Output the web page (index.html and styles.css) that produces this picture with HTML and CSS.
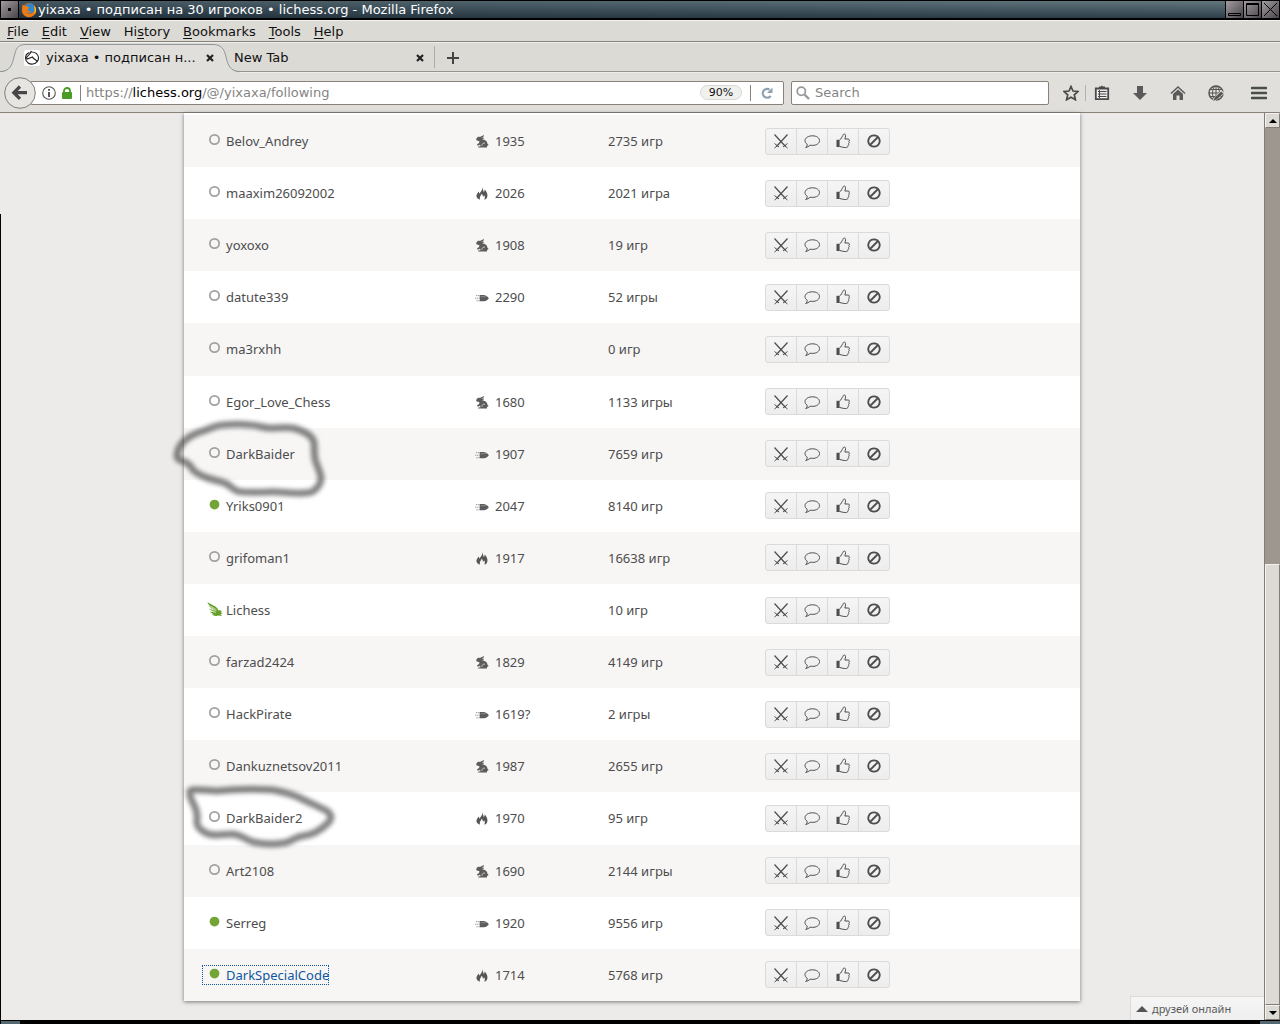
FILE: index.html
```html
<!DOCTYPE html>
<html lang="ru">
<head>
<meta charset="utf-8">
<title>yixaxa • подписан на 30 игроков • lichess.org</title>
<link rel="stylesheet" href="styles.css">
</head>
<body>
<svg class="sprite" aria-hidden="true">
  <symbol id="off" viewBox="0 0 12 12"><circle cx="6" cy="6" r="4.300" fill="none" stroke="#a0a0a0" stroke-width="1.600"/></symbol>
  <symbol id="on" viewBox="0 0 12 12"><circle cx="6" cy="6" r="4.500" fill="#72a536"/></symbol>
  <symbol id="wing" viewBox="0 0 16 16"><path fill="#639f26" d="M.5 1C5 4.500 9.500 4.500 11.500 9.500 13 9 14 9.500 15 10.500L13.500 11 15.500 12.500 13.500 13 15 15 11.500 14.500C8.500 15.500 6 14.500 5 13.200L10 13.300C7 13.300 4 12.500 3 10.500L9.500 11.800C5.500 10.800 3 9.500 2 7.500L9.500 10.500C5 8 2.500 6.500 1.600 4.500L10.500 9.200C6 5.500 1 5 .5 1z"/><path d="M2.500 5.500L9.500 9.800M3 9L9 11.500" stroke="#fff" stroke-width=".6"/></symbol>
  <symbol id="rabbit" viewBox="0 0 13 13"><path fill="#5c5c5c" d="M1 3.500C1.500 2 3 1.600 4.300 1.900L8.500 0 8.200 1.500 6 2.800 8.500 2.600 8 3.700 6 4.300C9.500 4.300 12 6.500 12 9L13 9.500 12.500 10.800 11.500 10.700V12.500H2.500L3 11.500 5 11.200 4.500 9.400 3.500 10.500 1.500 10.300 1.700 9.300 3.500 8 4 6.200 1.500 5.600C.6 5.200.6 4.300 1 3.500z"/><path d="M6.500 10.800C6.300 8.800 7.700 7.700 9.500 8.200" fill="none" stroke="#ddd" stroke-width=".8"/></symbol>
  <symbol id="fire" viewBox="0 0 13 14"><path fill="#555" d="M7 0C7.500 3 8 3.500 8.300 5.300 9.300 4.500 9.600 3.500 9.300 2.300 11.500 5 13 7.500 12.200 10.500 11.800 12.300 10.800 13.200 9 13.700 9.800 12 9.800 10.500 8.800 9 8.500 10 8 10.300 7.500 10.600 7.400 9 7 8 6 7.300 5.700 9.300 3.300 10.500 4.500 13.800 2 13 .4 11.500.5 9.500.7 7.500 2.200 6.500 2.700 4.800 3.400 5.500 3.500 6.300 3.400 7.200 5.500 5 7.300 3 7 0z"/></symbol>
  <symbol id="bullet" viewBox="0 -1 15 9"><path fill="#5c5c5c" d="M5 .8H9.500C12 1.300 14 3 14.800 4.200 14 5.600 12 7.200 9.500 7.600H5z"/><path d="M1 1.500H5M0 4.300H5M1.500 7H5" fill="none" stroke="#888" stroke-width=".9" stroke-dasharray="1.500 .7"/><path d="M6 2.600H12" stroke="#aaa" stroke-width=".6"/></symbol>
  <symbol id="swords" viewBox="0 0 16 16"><g fill="none" stroke="currentColor"><path d="M1.500 1.500L12.500 13.500M14.500 1.500L3.500 13.500" stroke-width="1.200"/><path d="M1.500 10.500L6 14M14.500 10.500L10 14M1.500 15L4.500 12.500M14.500 15L11.500 12.500" stroke-width="1"/></g></symbol>
  <symbol id="chat" viewBox="0 0 16 16"><path fill="none" stroke="currentColor" stroke-width="1" d="M8.500 2.800C12.500 2.800 15.500 4.800 15.500 7.600S12.500 12.400 8.500 12.400C7.800 12.400 7 12.300 6.300 12.200 4.800 13.300 3.500 14.200 1.700 14.500 2.800 13.300 3.200 12.500 3.200 11.200 1.800 10.300 1 9 1 7.600 1 4.800 4.500 2.800 8.500 2.800z"/></symbol>
  <symbol id="thumb" viewBox="0 0 16 16"><path fill="none" stroke="currentColor" stroke-width="1" d="M4.500 7C6.500 6 6.800 3.800 7.700 2.800 8.200 2 8.200 1 9.300 1 11 1.200 10.800 3.500 9.800 6H13.200C14.700 6.200 14.700 7.700 13.800 8.300 14.500 9.200 14.200 10.200 13.500 10.700 14 11.700 13.500 12.500 12.800 12.800 12.800 14.200 12 14.700 10.800 14.500 8.500 14.700 6.500 13.800 4.500 13.500"/><path fill="currentColor" d="M1.500 6.800H4.600V14H1.500z"/></symbol>
  <symbol id="ban" viewBox="0 0 16 16"><path fill="none" stroke="currentColor" stroke-width="1.800" d="M12 4L4 12M8 2.300A5.700 5.700 0 1 1 7.990 2.300z"/></symbol>
  <symbol id="close" viewBox="0 0 8 8"><path d="M1 1L7 7M7 1L1 7" stroke="#222" stroke-width="2.200"/></symbol>
</svg>

<header class="titlebar">
  <button class="wm" aria-label="Window menu"><svg viewBox="0 0 17 17"><path d="M7 7h3v3H7z"/></svg></button>
  <svg class="firefox" viewBox="0 0 16 16" aria-hidden="true"><circle cx="8" cy="8" r="7" fill="#e66000"/><circle cx="8.500" cy="6.500" r="5.300" fill="#2f86c9"/><path fill="#f07a12" d="M1.500 2.500L3.500 4C5 3.500 6 4 6.500 4.800L8.500 5.500 6.500 7.200C7 9.500 9.500 10 11 9 9 12 5.500 11 5 9 5 12 11 14 13.500 8.500L13.200 3.500C16 7 15.800 12 11 14.500 5 17 .5 12 1 8z"/><path fill="#ffce3a" d="M13 3.500C15.500 6 15.500 9.500 13.700 12 14 9 14 6 13 3.500z"/></svg>
  <span class="caption">yixaxa • подписан на 30 игроков • lichess.org - Mozilla Firefox</span>
  <button class="wm" aria-label="Minimize"><svg viewBox="0 0 17 17"><path d="M2.500 12.500h12v2h-12z" fill="none" stroke="#000"/></svg></button>
  <button class="wm" aria-label="Maximize"><svg viewBox="0 0 17 17"><path d="M2.500 2.500h12v12h-12zM2 3.500h13" fill="none" stroke="#000"/></svg></button>
  <button class="wm" aria-label="Close"><svg viewBox="0 0 17 17"><path d="M2 2l13 13M15 2L2 15" fill="none" stroke="#000"/></svg></button>
</header>

<nav class="menubar">
  <a href="#"><u>F</u>ile</a><a href="#"><u>E</u>dit</a><a href="#"><u>V</u>iew</a><a href="#">Hi<u>s</u>tory</a><a href="#"><u>B</u>ookmarks</a><a href="#"><u>T</u>ools</a><a href="#"><u>H</u>elp</a>
</nav>

<div class="tabs">
  <div class="tab active">
    <svg class="tab-shape" viewBox="0 0 240 30" aria-hidden="true"><path d="M0 29C10 29 12 22 14 14 16 6 17 1.500 26 1.500H212C222 1.500 224 6 226 14 228 22 230 29 240 29V30H0z" fill="#e0dfdb"/><path d="M0 28.500C10 28.500 12 22 14 14 16 6 17 1.500 26 1.500H212C222 1.500 224 6 226 14 228 22 230 28.500 240 28.500" fill="none" stroke="#8f979b"/></svg>
    <svg class="favicon" viewBox="0 0 16 16" aria-hidden="true"><rect width="16" height="16" rx="2" fill="#fff"/><path d="M5.500 2.500C3 3.500 1.300 6 1.500 8.500 2 12.500 5.500 14.500 9 14 12.500 13.500 14.800 10.500 14.500 7.500 14.200 4.500 11.500 2 8 2L7 1.500 6.500 3 2.500 7.500 3.200 9 8.500 7C9.500 9.500 12.500 9.500 13.500 12" fill="none" stroke="#222" stroke-width="1.100"/></svg>
    <span class="tab-label">yixaxa • подписан н...</span>
    <button class="tab-close" aria-label="Close tab"><svg><use href="#close"/></svg></button>
  </div>
  <div class="tab idle">
    <span class="tab-label">New Tab</span>
    <button class="tab-close" aria-label="Close tab"><svg><use href="#close"/></svg></button>
  </div>
  <button class="new-tab" aria-label="New tab"><svg viewBox="0 0 12 12"><path d="M6 0v12M0 6h12" stroke="#444" stroke-width="2"/></svg></button>
</div>

<div class="toolbar">
  <button class="back" aria-label="Back"><svg viewBox="0 0 32 32"><circle cx="16" cy="16" r="15.300" fill="#e6e5e1" stroke="#857d73"/><path d="M16 9.500L9.800 15.700l6.200 6.200M11 15.700h12" fill="none" stroke="#484848" stroke-width="3.200"/></svg></button>
  <div class="field address">
    <svg class="info" viewBox="0 0 14 14" aria-hidden="true"><circle cx="7" cy="7" r="6.300" fill="none" stroke="#555" stroke-width="1.100"/><path d="M7 3v1.800M7 6v5" stroke="#444" stroke-width="1.800"/></svg>
    <svg class="lock" viewBox="0 0 10 12" aria-hidden="true"><path d="M2 6V4a3 3 0 0 1 6 0v2" fill="none" stroke="#4b9b27" stroke-width="1.800"/><rect y="5" width="10" height="7" rx="1" fill="#4b9b27"/></svg>
    <span class="url">https://<b>lichess.org</b>/@/yixaxa/following</span>
    <button class="zoom">90%</button>
    <button class="reload" aria-label="Reload"><svg viewBox="0 0 12 12"><path d="M8.500 2.600A4.400 4.400 0 1 0 9.700 9" fill="none" stroke="#91a0b0" stroke-width="2.200"/><path d="M11.500.5V6H6z" fill="#91a0b0"/></svg></button>
  </div>
  <label class="field search">
    <svg viewBox="0 0 14 14" aria-hidden="true"><circle cx="5.300" cy="5.300" r="4.100" fill="none" stroke="#999" stroke-width="1.800"/><path d="M8.500 8.500l4.500 4.500" stroke="#999" stroke-width="2.400"/></svg>
    <input type="text" placeholder="Search" aria-label="Search">
  </label>
  <div class="tools">
    <button aria-label="Bookmark"><svg viewBox="0 0 16 16"><path d="M8 1.500l2 4.500 5 .5-3.700 3.300 1.100 4.900L8 12.200l-4.400 2.500 1.100-4.900L1 6.500 6 6z" fill="none" stroke="#4a4a4a" stroke-width="1.700"/></svg></button>
    <button class="split" aria-label="Bookmark list"><svg viewBox="0 0 16 16"><path d="M1.800 3.500h12.400v10.700H1.800z" fill="#eee" stroke="#4a4a4a" stroke-width="1.800"/><path d="M5 1.500h2L8 .5l1 1h2V4H5z" fill="#4a4a4a"/><path d="M4 6.500h8.500M4 9h8.500M4 11.500h8.500M5.500 5v8" stroke="#4a4a4a"/></svg></button>
    <button aria-label="Downloads"><svg viewBox="0 0 16 16"><path d="M5 1h6v7h4l-7 7-7-7h4z" fill="#5a5a5a"/></svg></button>
    <button aria-label="Home"><svg viewBox="0 0 16 16"><path d="M1 8.500L8 2l7 6.500" fill="none" stroke="#5a5a5a" stroke-width="1.500"/><path d="M3 9l5-4.600L13 9v6H9.500v-4.500h-3V15H3z" fill="#5a5a5a"/></svg></button>
    <button aria-label="Add-on"><svg viewBox="0 0 16 16"><g fill="none" stroke="#555"><circle cx="8" cy="8" r="7" stroke-width="1.500"/><ellipse cx="8" cy="8" rx="3.500" ry="7"/><path d="M1 8h14M2 4.500h12M2 11.500h12M8 1v14"/></g><path d="M4.500 14.500L13.500 5l3 3-9 8z" fill="#e0dfdb"/><path d="M5.500 15.500l1.200-3 6.500-6 2 2-6.500 6z" fill="#555"/></svg></button>
    <button class="app-menu" aria-label="Menu"><svg viewBox="0 0 16 16"><path d="M1 3h14M1 8h14M1 13h14" stroke="#4a4e4a" stroke-width="2.600" stroke-linecap="round"/></svg></button>
  </div>
</div>

<div class="viewport">
  <main class="page">
    <table class="players">
      <colgroup><col class="c-name"><col class="c-rating"><col class="c-games"><col></colgroup>
      <tbody>
      <tr><td><a class="user" href="#"><svg><use href="#off"/></svg>Belov_Andrey</a></td><td><span class="rating"><svg><use href="#rabbit"/></svg>1935</span></td><td>2735 игр</td><td><div class="actions"><button aria-label="Вызвать"><svg><use href="#swords"/></svg></button><button aria-label="Написать"><svg><use href="#chat"/></svg></button><button aria-label="Отписаться"><svg><use href="#thumb"/></svg></button><button aria-label="Заблокировать"><svg><use href="#ban"/></svg></button></div></td></tr>
      <tr><td><a class="user" href="#"><svg><use href="#off"/></svg>maaxim26092002</a></td><td><span class="rating"><svg><use href="#fire"/></svg>2026</span></td><td>2021 игра</td><td><div class="actions"><button aria-label="Вызвать"><svg><use href="#swords"/></svg></button><button aria-label="Написать"><svg><use href="#chat"/></svg></button><button aria-label="Отписаться"><svg><use href="#thumb"/></svg></button><button aria-label="Заблокировать"><svg><use href="#ban"/></svg></button></div></td></tr>
      <tr><td><a class="user" href="#"><svg><use href="#off"/></svg>yoxoxo</a></td><td><span class="rating"><svg><use href="#rabbit"/></svg>1908</span></td><td>19 игр</td><td><div class="actions"><button aria-label="Вызвать"><svg><use href="#swords"/></svg></button><button aria-label="Написать"><svg><use href="#chat"/></svg></button><button aria-label="Отписаться"><svg><use href="#thumb"/></svg></button><button aria-label="Заблокировать"><svg><use href="#ban"/></svg></button></div></td></tr>
      <tr><td><a class="user" href="#"><svg><use href="#off"/></svg>datute339</a></td><td><span class="rating"><svg><use href="#bullet"/></svg>2290</span></td><td>52 игры</td><td><div class="actions"><button aria-label="Вызвать"><svg><use href="#swords"/></svg></button><button aria-label="Написать"><svg><use href="#chat"/></svg></button><button aria-label="Отписаться"><svg><use href="#thumb"/></svg></button><button aria-label="Заблокировать"><svg><use href="#ban"/></svg></button></div></td></tr>
      <tr><td><a class="user" href="#"><svg><use href="#off"/></svg>ma3rxhh</a></td><td></td><td>0 игр</td><td><div class="actions"><button aria-label="Вызвать"><svg><use href="#swords"/></svg></button><button aria-label="Написать"><svg><use href="#chat"/></svg></button><button aria-label="Отписаться"><svg><use href="#thumb"/></svg></button><button aria-label="Заблокировать"><svg><use href="#ban"/></svg></button></div></td></tr>
      <tr><td><a class="user" href="#"><svg><use href="#off"/></svg>Egor_Love_Chess</a></td><td><span class="rating"><svg><use href="#rabbit"/></svg>1680</span></td><td>1133 игры</td><td><div class="actions"><button aria-label="Вызвать"><svg><use href="#swords"/></svg></button><button aria-label="Написать"><svg><use href="#chat"/></svg></button><button aria-label="Отписаться"><svg><use href="#thumb"/></svg></button><button aria-label="Заблокировать"><svg><use href="#ban"/></svg></button></div></td></tr>
      <tr><td><a class="user" href="#"><svg><use href="#off"/></svg>DarkBaider</a></td><td><span class="rating"><svg><use href="#bullet"/></svg>1907</span></td><td>7659 игр</td><td><div class="actions"><button aria-label="Вызвать"><svg><use href="#swords"/></svg></button><button aria-label="Написать"><svg><use href="#chat"/></svg></button><button aria-label="Отписаться"><svg><use href="#thumb"/></svg></button><button aria-label="Заблокировать"><svg><use href="#ban"/></svg></button></div></td></tr>
      <tr><td><a class="user" href="#"><svg><use href="#on"/></svg>Yriks0901</a></td><td><span class="rating"><svg><use href="#bullet"/></svg>2047</span></td><td>8140 игр</td><td><div class="actions"><button aria-label="Вызвать"><svg><use href="#swords"/></svg></button><button aria-label="Написать"><svg><use href="#chat"/></svg></button><button aria-label="Отписаться"><svg><use href="#thumb"/></svg></button><button aria-label="Заблокировать"><svg><use href="#ban"/></svg></button></div></td></tr>
      <tr><td><a class="user" href="#"><svg><use href="#off"/></svg>grifoman1</a></td><td><span class="rating"><svg><use href="#fire"/></svg>1917</span></td><td>16638 игр</td><td><div class="actions"><button aria-label="Вызвать"><svg><use href="#swords"/></svg></button><button aria-label="Написать"><svg><use href="#chat"/></svg></button><button aria-label="Отписаться"><svg><use href="#thumb"/></svg></button><button aria-label="Заблокировать"><svg><use href="#ban"/></svg></button></div></td></tr>
      <tr><td><a class="user patron" href="#"><svg><use href="#wing"/></svg>Lichess</a></td><td></td><td>10 игр</td><td><div class="actions"><button aria-label="Вызвать"><svg><use href="#swords"/></svg></button><button aria-label="Написать"><svg><use href="#chat"/></svg></button><button aria-label="Отписаться"><svg><use href="#thumb"/></svg></button><button aria-label="Заблокировать"><svg><use href="#ban"/></svg></button></div></td></tr>
      <tr><td><a class="user" href="#"><svg><use href="#off"/></svg>farzad2424</a></td><td><span class="rating"><svg><use href="#rabbit"/></svg>1829</span></td><td>4149 игр</td><td><div class="actions"><button aria-label="Вызвать"><svg><use href="#swords"/></svg></button><button aria-label="Написать"><svg><use href="#chat"/></svg></button><button aria-label="Отписаться"><svg><use href="#thumb"/></svg></button><button aria-label="Заблокировать"><svg><use href="#ban"/></svg></button></div></td></tr>
      <tr><td><a class="user" href="#"><svg><use href="#off"/></svg>HackPirate</a></td><td><span class="rating"><svg><use href="#bullet"/></svg>1619?</span></td><td>2 игры</td><td><div class="actions"><button aria-label="Вызвать"><svg><use href="#swords"/></svg></button><button aria-label="Написать"><svg><use href="#chat"/></svg></button><button aria-label="Отписаться"><svg><use href="#thumb"/></svg></button><button aria-label="Заблокировать"><svg><use href="#ban"/></svg></button></div></td></tr>
      <tr><td><a class="user" href="#"><svg><use href="#off"/></svg>Dankuznetsov2011</a></td><td><span class="rating"><svg><use href="#rabbit"/></svg>1987</span></td><td>2655 игр</td><td><div class="actions"><button aria-label="Вызвать"><svg><use href="#swords"/></svg></button><button aria-label="Написать"><svg><use href="#chat"/></svg></button><button aria-label="Отписаться"><svg><use href="#thumb"/></svg></button><button aria-label="Заблокировать"><svg><use href="#ban"/></svg></button></div></td></tr>
      <tr><td><a class="user" href="#"><svg><use href="#off"/></svg>DarkBaider2</a></td><td><span class="rating"><svg><use href="#fire"/></svg>1970</span></td><td>95 игр</td><td><div class="actions"><button aria-label="Вызвать"><svg><use href="#swords"/></svg></button><button aria-label="Написать"><svg><use href="#chat"/></svg></button><button aria-label="Отписаться"><svg><use href="#thumb"/></svg></button><button aria-label="Заблокировать"><svg><use href="#ban"/></svg></button></div></td></tr>
      <tr><td><a class="user" href="#"><svg><use href="#off"/></svg>Art2108</a></td><td><span class="rating"><svg><use href="#rabbit"/></svg>1690</span></td><td>2144 игры</td><td><div class="actions"><button aria-label="Вызвать"><svg><use href="#swords"/></svg></button><button aria-label="Написать"><svg><use href="#chat"/></svg></button><button aria-label="Отписаться"><svg><use href="#thumb"/></svg></button><button aria-label="Заблокировать"><svg><use href="#ban"/></svg></button></div></td></tr>
      <tr><td><a class="user" href="#"><svg><use href="#on"/></svg>Serreg</a></td><td><span class="rating"><svg><use href="#bullet"/></svg>1920</span></td><td>9556 игр</td><td><div class="actions"><button aria-label="Вызвать"><svg><use href="#swords"/></svg></button><button aria-label="Написать"><svg><use href="#chat"/></svg></button><button aria-label="Отписаться"><svg><use href="#thumb"/></svg></button><button aria-label="Заблокировать"><svg><use href="#ban"/></svg></button></div></td></tr>
      <tr><td><a class="user focused" href="#"><svg><use href="#on"/></svg>DarkSpecialCode</a></td><td><span class="rating"><svg><use href="#fire"/></svg>1714</span></td><td>5768 игр</td><td><div class="actions"><button aria-label="Вызвать"><svg><use href="#swords"/></svg></button><button aria-label="Написать"><svg><use href="#chat"/></svg></button><button aria-label="Отписаться"><svg><use href="#thumb"/></svg></button><button aria-label="Заблокировать"><svg><use href="#ban"/></svg></button></div></td></tr>
      </tbody>
    </table>
    <!-- Hand-drawn marks round two of the players -->
    <svg class="marks" viewBox="0 0 180 440" aria-hidden="true"><path d="M7 42C8 32 16 24 30 19 40 16 46 12 53 12 63 11 72 11 80 12 88 12 92 15 100 15 110 15 116 14 123 15 134 18 143 22 144 30 145 38 143 44 147 52 150 60 153 66 149 72 145 78 142 80 134 80 120 81 110 78 97 79 84 79 72 80 67 78 60 75 60 71 52 69 40 66 32 64 24 58 20 54 22 52 15 49 9 47 7 46 7 42zM22 377C30 376 38 378 47 378 66 376 86 376 103 377 114 379 124 382 130 385 140 390 150 394 157 398 162 402 162 406 158 410 150 418 142 422 133 423 124 424 120 430 113 430 102 432 92 431 83 429 74 426 72 422 63 421 52 421 44 424 36 420 28 416 26 412 27 406 28 398 24 392 22 388 20 384 18 378 22 377z"/></svg>
  </main>
  <button class="friends"><svg viewBox="0 0 12 6" aria-hidden="true"><path d="M0 6L6 0l6 6z" fill="#555"/></svg>друзей онлайн</button>
  <div class="scrollbar" aria-hidden="true">
    <span class="arrow"><svg viewBox="0 0 8 4"><path d="M0 4l4-4 4 4z"/></svg></span>
    <span class="track"></span>
    <span class="thumb"></span>
    <span class="arrow"><svg viewBox="0 0 8 4"><path d="M0 0h8L4 4z"/></svg></span>
  </div>
</div>
<footer class="desktop-edge"></footer>
</body>
</html>
```
FILE: styles.css
```css
* { box-sizing: border-box; }
body {
  margin: 0;
  height: 100vh;
  overflow: hidden;
  display: flex;
  flex-direction: column;
  position: relative;
  background: #dbdad5;
  font: 13px/16px "DejaVu Sans", sans-serif;
  color: #111;
}
body::after {
  content: "";
  position: absolute;
  left: 0;
  top: 214px;
  bottom: 0;
  width: 1px;
  background: #000;
}
button { margin: 0; padding: 0; border: 0; background: none; font: inherit; color: inherit; }
a { color: inherit; text-decoration: none; }
svg { display: block; flex: none; }
.sprite { position: absolute; width: 0; height: 0; }

.titlebar {
  display: flex;
  align-items: center;
  gap: 1px;
  flex: none;
  height: 20px;
  padding: 0 1px;
  border-top: 1px solid #000;
  border-bottom: 2px solid #000;
  background: linear-gradient(rgba(0, 0, 0, 0), rgba(10, 25, 40, .6)), linear-gradient(90deg, #44565f, #64787f);
  color: #fff;
}
.wm {
  width: 17px;
  height: 17px;
  background: linear-gradient(135deg, #a09ca0, #484448);
  outline: 1px solid #000;
}
.wm svg { width: 17px; height: 17px; }
.firefox { width: 16px; height: 16px; margin-left: 2px; }
.caption { flex: 1; white-space: nowrap; }

.menubar {
  display: flex;
  align-items: center;
  gap: 13px;
  flex: none;
  height: 22px;
  padding: 2px 7px 0;
  border-top: 1px solid #f3f2ef;
  border-bottom: 1px solid #85837c;
}
.menubar u { text-underline-offset: 2px; }

.tabs {
  display: flex;
  align-items: center;
  flex: none;
  height: 30px;
  border-top: 1px solid #f0efeb;
  border-bottom: 1px solid #96948d;
}
.tab, .new-tab { padding-top: 2px; }
.tab { position: relative; display: flex; align-items: center; height: 29px; }
.active { width: 228px; padding-left: 24px; padding-right: 14px; gap: 6px; }
.idle { width: 207px; height: 22px; padding-left: 6px; padding-right: 10px; border-right: 1px solid #aeaca6; }
.tab-shape { position: absolute; left: 0; top: 0; width: 240px; height: 30px; }
.favicon { position: relative; width: 16px; height: 16px; }
.tab-label { position: relative; flex: 1; white-space: nowrap; }
.tab-close { position: relative; width: 8px; height: 8px; }
.tab-close svg { width: 8px; height: 8px; }
.new-tab { margin-left: 12px; }
.new-tab svg { width: 12px; height: 12px; }

.toolbar {
  display: flex;
  align-items: center;
  flex: none;
  height: 41px;
  padding-left: 4px;
  border-top: 1px solid #eeede9;
  border-bottom: 1px solid #8a8178;
  background: #e0dfdb;
}
.back { position: relative; z-index: 1; }
.back svg { width: 32px; height: 32px; }
.field {
  display: flex;
  align-items: center;
  height: 24px;
  border: 1px solid #8a8178;
  border-radius: 2px;
  background: #fff;
}
.address { flex: 1; margin-left: -6px; padding-left: 11px; }
.info { width: 14px; height: 14px; }
.lock { width: 10px; height: 12px; margin: 0 8px 0 6px; }
.url { flex: 1; padding-left: 5px; border-left: 1px solid #8a8178; color: #848484; white-space: nowrap; }
.url b { font-weight: normal; color: #000; }
.zoom {
  width: 42px;
  height: 15px;
  border: 1px solid #d8d7d3;
  border-radius: 8px;
  background: #f0f0ee;
  font-size: 11px;
  line-height: 13px;
}
.reload { margin-left: 8px; padding: 2px 10px; border-left: 1px solid #8a8178; }
.reload svg { width: 12px; height: 12px; }
.search { width: 258px; margin-left: 7px; padding: 0 4px; gap: 5px; }
.search svg { width: 14px; height: 14px; }
.search input { flex: 1; min-width: 0; padding: 0; border: 0; outline: 0; background: none; font: inherit; }
.search input::placeholder { color: #848484; opacity: 1; }
.tools { display: flex; align-items: center; height: 40px; padding: 0 13px 0 14px; gap: 22px; }
.tools svg { width: 16px; height: 16px; }
.tools .split { margin-left: -16px; padding-left: 8px; border-left: 1px solid #b4b2ac; }
.tools .app-menu { margin-left: -1px; padding: 9px 0 9px 6px; }

.viewport { position: relative; display: flex; flex: 1; min-height: 0; background: #edebe9; }
.page {
  position: relative;
  width: 100%;
  max-width: 896px;
  height: 888px;
  margin: 0 auto;
  padding-top: 2px;
  background: #fff;
  box-shadow: 0 1px 4px rgba(0, 0, 0, .5);
}
.players {
  width: 100%;
  height: 100%;
  table-layout: fixed;
  border-collapse: collapse;
  font: 13px/20px "Noto Sans", sans-serif;
  color: #4d4d4d;
}
.c-name { width: 290px; }
.c-rating { width: 134px; }
.c-games { width: 157px; }
.players td { height: 52px; padding: 0; }
.players td:first-child { padding-left: 18px; }
.players tr:nth-child(odd) { background: #f7f6f5; }
.user, .rating { display: flex; align-items: center; width: max-content; }
.user svg { width: 13px; height: 13px; margin: 0 5px 3px 6px; }
.user.patron svg { width: 16px; height: 16px; margin: 0 3px 3px 5px; }
.focused { color: #0d56a0; outline: 1px dotted #0d56a0; outline-offset: -1px; }
.rating svg { width: 14px; height: 13px; margin: 1px 6px 0 1px; }
.actions { display: flex; color: #4d4d4d; }
.actions button {
  width: 32px;
  height: 27px;
  padding: 0 7px;
  border: 1px solid #dadada;
  background: linear-gradient(#f5f5f5, #ededed);
}
.actions button + button { margin-left: -1px; }
.actions button:first-child { border-radius: 3px 0 0 3px; }
.actions button:last-child { border-radius: 0 3px 3px 0; }
.actions svg { width: 16px; height: 16px; }

.marks {
  position: absolute;
  left: -14px;
  top: 300px;
  width: 180px;
  height: 440px;
  filter: blur(2px);
  fill: none;
  stroke: rgba(50, 50, 50, .6);
  stroke-width: 7;
  pointer-events: none;
}

.friends {
  position: absolute;
  right: 16px;
  bottom: 0;
  display: flex;
  align-items: center;
  gap: 4px;
  width: 134px;
  height: 24px;
  padding-left: 5px;
  border: 1px solid #dadada;
  border-width: 1px 0 0 1px;
  background: linear-gradient(#f5f5f5, #efefef);
  font: 11px/20px "Noto Sans", sans-serif;
  color: #5a5a5a;
}
.friends svg { width: 12px; height: 6px; }

.scrollbar {
  display: flex;
  flex-direction: column;
  flex: none;
  width: 16px;
  border-left: 1px solid #857d73;
  background: #9e9790;
}
.scrollbar .arrow, .scrollbar .thumb {
  border: 1px solid #857d73;
  border-top-color: #f3f2ef;
  border-left-color: #f3f2ef;
  background: #dbdad5;
}
.arrow { display: grid; place-items: center; height: 15px; }
.arrow svg { width: 8px; height: 4px; }
.track { flex: 437; }
.thumb { flex: 441; }

.desktop-edge {
  flex: none;
  height: 4px;
  border-top: 1px solid #000;
  background: linear-gradient(90deg, #546872 20px, #000 20px calc(100% - 20px), #546872 calc(100% - 20px));
}
```
